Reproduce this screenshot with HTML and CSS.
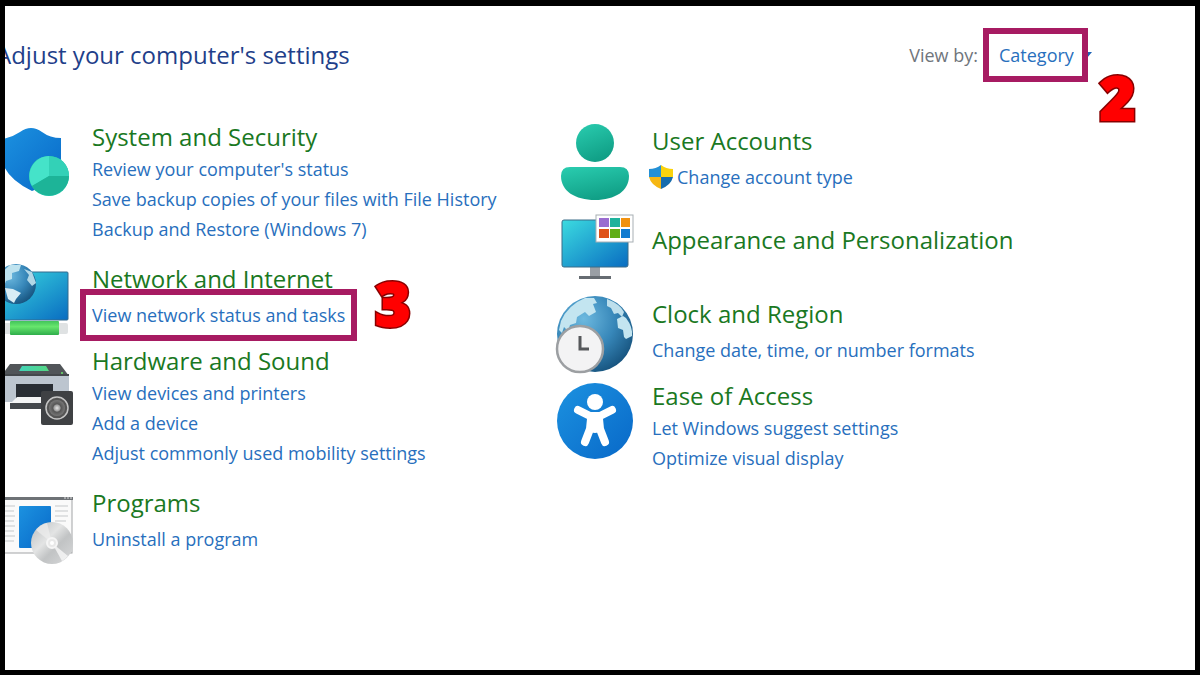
FILE: index.html
```html
<!DOCTYPE html>
<html lang="en">
<head>
    <meta charset="UTF-8">
    <meta name="viewport" content="width=device-width, initial-scale=1.0">
    <title>Control Panel</title>
    <link rel="stylesheet" href="styles.css">
</head>
<body>

    <div class="panel">
        <header class="header">
            <h1>Adjust your computer's settings</h1>
            <div class="view-by">
                <label for="view_by">View by:</label>
                <div class="picker">
                    <select id="view_by" name="view_by">
                        <option>Category</option>
                    </select>
                    <svg class="arrow" viewBox="0 0 10 6"><path d="M0 0h10L5 6z" fill="#1c62b5"/></svg>
                    <span class="highlight"></span>
                    <span class="step" data-step="2">2</span>
                </div>
            </div>
        </header>

        <main class="categories">
            <div class="column">
                <section class="category multi">
                    <svg class="icon" viewBox="0 0 78 78">
                        <defs>
                            <linearGradient id="shield" x1="0" y1="0" x2="1" y2="1"><stop offset="0" stop-color="#1c92e0"/><stop offset="1" stop-color="#0868c8"/></linearGradient>
                        </defs>
                        <path d="M6 15Q15 14 24 8Q35 0 46 8Q54 14 65 14V36C65 52 53 60 36 67Q6 52 6 32z" fill="url(#shield)"/>
                        <circle cx="53" cy="52" r="20" fill="#21c5aa"/>
                        <path d="M53 52V32A20 20 0 0 0 36 62z" fill="#45e3c9"/>
                        <path d="M53 52V32A20 20 0 0 1 73 52z" fill="#33d1b7"/>
                        <path d="M53 52H73A20 20 0 0 1 36 62z" fill="#1db498"/>
                    </svg>
                    <div>
                        <h2>System and Security</h2>
                        <ul>
                            <li><a href="#">Review your computer's status</a></li>
                            <li><a href="#">Save backup copies of your files with File History</a></li>
                            <li><a href="#">Backup and Restore (Windows 7)</a></li>
                        </ul>
                    </div>
                </section>

                <section class="category">
                    <svg class="icon" viewBox="0 0 78 78">
                        <defs>
                            <linearGradient id="screen" x1="0" y1="0" x2="1" y2="1"><stop offset="0" stop-color="#3bdbe0"/><stop offset="1" stop-color="#096cc1"/></linearGradient>
                            <radialGradient id="globe" cx="0.35" cy="0.3" r="0.75"><stop offset="0" stop-color="#6db9df"/><stop offset="0.55" stop-color="#3787b9"/><stop offset="1" stop-color="#17547f"/></radialGradient>
                            <linearGradient id="cable" x1="0" y1="0" x2="0" y2="1"><stop offset="0" stop-color="#42c45a"/><stop offset="0.4" stop-color="#67e66d"/><stop offset="1" stop-color="#2fad4b"/></linearGradient>
                        </defs>
                        <rect x="1" y="12" width="71" height="48" rx="1" fill="url(#screen)" stroke="#356b8d"/>
                        <circle cx="20" cy="24" r="20" fill="url(#globe)"/>
                        <path d="M6 12L14 5L25 5L23 11L16 13L16 19L10 21L8 26L4 21z" fill="#bfe3ef"/>
                        <path d="M9 28L17 29L25 33L20 39L18 43L12 39z" fill="#d9edf5"/>
                        <path d="M28 9L36 12L40 23L36 26L31 20L33 15z" fill="#b2d7e6"/>
                        <rect x="2" y="63" width="70" height="11" rx="2" fill="#dfe2e3"/>
                        <rect x="14" y="61" width="49" height="14" rx="1" fill="url(#cable)"/>
                    </svg>
                    <div>
                        <h2>Network and Internet</h2>
                        <ul>
                            <li class="marked">
                                <a href="#">View network status and tasks</a>
                                <span class="highlight"></span>
                                <span class="step" data-step="3">3</span>
                            </li>
                        </ul>
                    </div>
                </section>

                <section class="category multi">
                    <svg class="icon" viewBox="0 0 78 78">
                        <defs>
                            <linearGradient id="tray" x1="0" y1="0" x2="1" y2="0"><stop offset="0" stop-color="#42d3b8"/><stop offset="1" stop-color="#54d783"/></linearGradient>
                            <radialGradient id="cone"><stop offset="0" stop-color="#e4e4e4"/><stop offset="0.4" stop-color="#999"/><stop offset="0.5" stop-color="#555"/><stop offset="1" stop-color="#777"/></radialGradient>
                        </defs>
                        <path d="M14 16H64L73 28H5z" fill="#515559"/>
                        <path d="M5 27H73V54H5z" fill="#bcc5cf"/>
                        <path d="M5 26H73V28H5z" fill="#44484c"/>
                        <path d="M26 18H50L53 23H23z" fill="url(#tray)"/>
                        <circle cx="66" cy="25" r="1" fill="#6ee26d"/>
                        <path d="M20 36H57V52H20z" fill="#292e34"/>
                        <path d="M14 55H60V61H14z" fill="#43474c"/>
                        <path d="M21 49H55V55H15z" fill="#f3f4f5"/>
                        <rect x="45" y="43" width="32" height="34" rx="2" fill="#3f4144"/>
                        <circle cx="61" cy="60" r="11" fill="#555" stroke="#c5c5c5" stroke-width="1.5"/>
                        <circle cx="61" cy="60" r="8" fill="url(#cone)"/>
                    </svg>
                    <div>
                        <h2>Hardware and Sound</h2>
                        <ul>
                            <li><a href="#">View devices and printers</a></li>
                            <li><a href="#">Add a device</a></li>
                            <li><a href="#">Adjust commonly used mobility settings</a></li>
                        </ul>
                    </div>
                </section>

                <section class="category">
                    <svg class="icon" viewBox="0 0 78 78">
                        <defs>
                            <linearGradient id="disc" x1="0" y1="0" x2="1" y2="1"><stop offset="0" stop-color="#b9bcbe"/><stop offset="0.4" stop-color="#e3e4e4"/><stop offset="0.6" stop-color="#c1c3c4"/><stop offset="1" stop-color="#d9dadb"/></linearGradient>
                        </defs>
                        <rect x="0" y="14" width="76" height="55" fill="#fafafa" stroke="#a2a4a6"/>
                        <path d="M0 13H77V16H0z" fill="#6e7276"/>
                        <path d="M68 14h2M71 14h2M74 14h2" stroke="#ddd"/>
                        <path d="M8 22H19M8 27H18M8 32H19M8 37H18M8 42H19M8 47H18M8 52H19M8 57H18M59 22H72M59 27H72M59 32H72M59 37H70" stroke="#c5c8ca"/>
                        <rect x="23" y="22" width="32" height="42" rx="1" fill="url(#shield)"/>
                        <circle cx="56" cy="59" r="21" fill="url(#disc)"/>
                        <path d="M56 59L40 46A21 21 0 0 1 51 39z" fill="#eee" opacity="0.7"/>
                        <path d="M56 59L72 72A21 21 0 0 1 66 77z" fill="#f7f7f7" opacity="0.8"/>
                        <circle cx="56" cy="59" r="5" fill="#e8e8e8" stroke="#f5f5f5" stroke-width="2"/>
                        <circle cx="56" cy="59" r="2" fill="#fff"/>
                    </svg>
                    <div>
                        <h2>Programs</h2>
                        <ul>
                            <li><a href="#">Uninstall a program</a></li>
                        </ul>
                    </div>
                </section>
            </div>

            <div class="column second">
                <section class="category">
                    <svg class="icon" viewBox="0 0 78 78">
                        <defs>
                            <linearGradient id="person" x1="0" y1="0" x2="0.4" y2="1"><stop offset="0" stop-color="#2acdb0"/><stop offset="1" stop-color="#11a087"/></linearGradient>
                        </defs>
                        <circle cx="39" cy="21" r="19" fill="url(#person)"/>
                        <path d="M14 45H64Q73 45 73 54C73 69 59 78 39 78S5 69 5 54Q5 45 14 45z" fill="url(#person)"/>
                    </svg>
                    <div>
                        <h2>User Accounts</h2>
                        <ul>
                            <li>
                                <svg class="uac" viewBox="0 0 24 24">
                                    <path d="M12 0Q7 4 0 4V12H12z" fill="#2490d5"/>
                                    <path d="M12 0Q17 4 24 4V12H12z" fill="#fad20c"/>
                                    <path d="M0 12Q2 20 12 24V12z" fill="#f6b713"/>
                                    <path d="M24 12Q22 20 12 24V12z" fill="#176cad"/>
                                </svg>
                                <a href="#">Change account type</a>
                            </li>
                        </ul>
                    </div>
                </section>

                <section class="category title-only">
                    <svg class="icon" viewBox="0 0 78 78">
                        <path d="M34 58H44V67H34z" fill="#9a9fa5"/>
                        <path d="M23 67H55V70H23z" fill="#666c72"/>
                        <rect x="6" y="11" width="66" height="47" rx="2" fill="url(#screen)" stroke="#3b6d88"/>
                        <rect x="40" y="6" width="37" height="27" fill="#fff" stroke="#a8afb4"/>
                        <path d="M43 9h10v9h-10z" fill="#9a6cd0"/>
                        <path d="M54 9h10v9h-10z" fill="#1eb29c"/>
                        <path d="M65 9h9v9h-9z" fill="#f19210"/>
                        <path d="M43 20h10v9h-10z" fill="#df5218"/>
                        <path d="M54 20h10v9h-10z" fill="#60ad17"/>
                        <path d="M65 20h9v9h-9z" fill="#117bd0"/>
                    </svg>
                    <div>
                        <h2>Appearance and Personalization</h2>
                    </div>
                </section>

                <section class="category">
                    <svg class="icon" viewBox="0 0 78 78">
                        <circle cx="39" cy="39" r="38" fill="url(#globe)"/>
                        <path d="M5 26Q12 10 29 3L38 3L41 8L37 9L40 17L33 21L29 17L21 22L20 28L14 30L12 36L8 32L6 38L3 35z" fill="#c3e5f0"/>
                        <path d="M51 4Q64 9 68 17L66 22L62 18L58 19L55 13L51 11z" fill="#bddfec"/>
                        <path d="M61 24L67 21L70 23Q77 32 76 41L70 44L68 42L67 35L62 33z" fill="#c3e5f0"/>
                        <circle cx="24" cy="54" r="23" fill="#f3f3f4" stroke="#9c9fa2" stroke-width="2.5"/>
                        <path d="M24 41V54H33" fill="none" stroke="#56585b" stroke-width="3"/>
                    </svg>
                    <div>
                        <h2>Clock and Region</h2>
                        <ul>
                            <li><a href="#">Change date, time, or number formats</a></li>
                        </ul>
                    </div>
                </section>

                <section class="category multi">
                    <svg class="icon" viewBox="0 0 78 78">
                        <circle cx="39" cy="38" r="38" fill="url(#shield)"/>
                        <circle cx="39" cy="19" r="8" fill="#fff"/>
                        <path d="M22 27L34 33H44L56 27M39 35V46M35 36L34 46L29 59M43 36L44 46L49 59" fill="none" stroke="#fff" stroke-width="8" stroke-linecap="round" stroke-linejoin="round"/>
                    </svg>
                    <div>
                        <h2>Ease of Access</h2>
                        <ul>
                            <li><a href="#">Let Windows suggest settings</a></li>
                            <li><a href="#">Optimize visual display</a></li>
                        </ul>
                    </div>
                </section>
            </div>
        </main>
    </div>

</body>
</html>
```
FILE: styles.css
```css
* { box-sizing: border-box; }
body { margin: 0; background: #fff; font-family: "Open Sans", "Noto Sans", sans-serif; font-size: 18px; }
h1, h2, ul { margin: 0; padding: 0; font-weight: normal; }
ul { list-style: none; }

.panel { min-height: 100vh; border: 5px solid #000; border-top-width: 6px; overflow: hidden; }

.header { display: flex; justify-content: space-between; align-items: center; padding: 33px 103px 0 0; margin-left: -9px; line-height: 32px; }
.header h1 { font-size: 24px; color: #1f3f8a; white-space: nowrap; }
.view-by { display: flex; align-items: center; gap: 21px; color: #70757c; }
.picker { position: relative; display: flex; align-items: center; gap: 8px; }
.picker select { appearance: none; border: none; background: none; padding: 0; margin: 0; font: inherit; color: #286fbd; }
.arrow { width: 10px; height: 6px; }

.categories { display: grid; grid-template-columns: 1fr 1fr; margin-left: -9px; padding: 50px 79px 40px 0; }
.column { display: flex; flex-direction: column; gap: 15px; }
.second { padding-top: 4px; }
.category { display: flex; align-items: flex-start; gap: 18px; white-space: nowrap; }
.category h2 { font-size: 24px; line-height: 32px; color: #1a7822; }
.category ul { padding-top: 5px; }
.category li { display: flex; align-items: center; gap: 4px; line-height: 30px; }
.category a { color: #286fbd; text-decoration: none; }
.category a:hover { text-decoration: underline; }
.multi { padding-bottom: 4px; }
.multi ul { padding-top: 1px; }
.title-only { padding: 17px 0 27px; }

.icon { width: 78px; height: 78px; flex: none; margin: -3px 0 -8px; overflow: visible; }
.multi .icon { margin: 3px 0 0; }
.title-only .icon { margin: -15px 0 -31px; }
.uac { width: 24px; height: 24px; margin-left: -3px; }

/* tutorial marks */
.category .marked { position: relative; width: fit-content; }
.highlight { position: absolute; inset: -11px -12px; border: 6px solid #a71b62; pointer-events: none; }
.picker .highlight { inset: -11px 4px -11px -16px; }
.step { position: absolute; left: 100%; top: 50%; font-size: 60px; font-weight: 800; line-height: 60px; color: #800; -webkit-text-stroke: 5px #800; }
.step::after { content: attr(data-step); position: absolute; left: 0; top: 0; color: #f00; -webkit-text-stroke: 2px #f00; }
.picker .step { margin: -12px 0 0 8px; }
.marked .step { margin: -42px 0 0 30px; }
.picker .step { margin-top: 12px; }
```
